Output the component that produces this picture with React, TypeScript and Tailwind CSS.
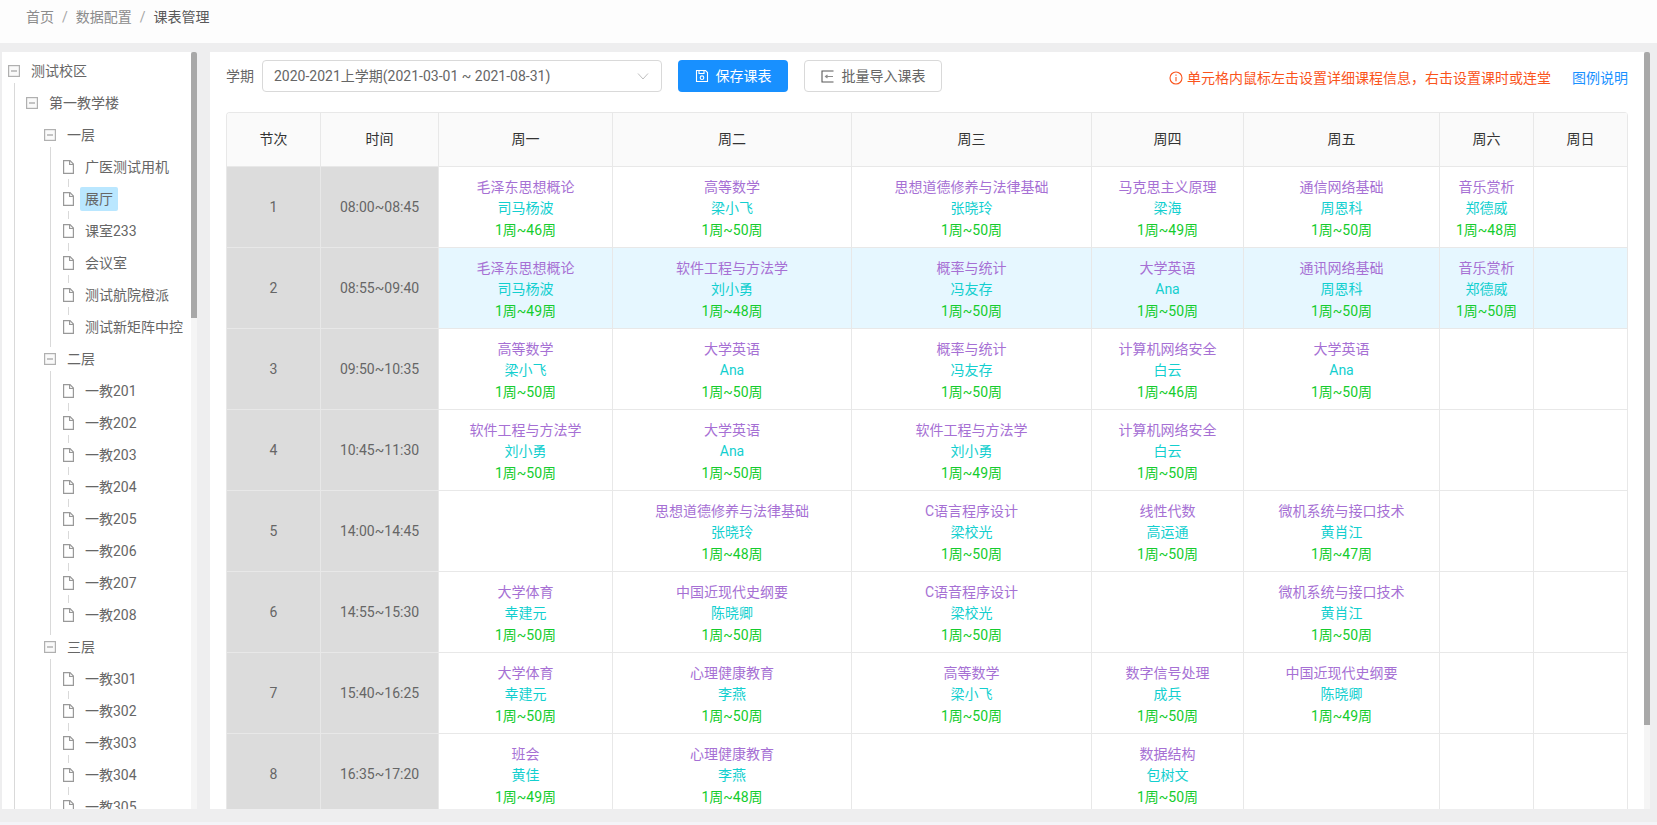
const FONT = "font-['Roboto','Noto_Sans_CJK_SC',sans-serif]";

type Course = [string, string, string] | null;

const rows: { no: number; time: string; blue?: boolean; cells: Course[] }[] = [
  {
    no: 1,
    time: "08:00~08:45",
    cells: [
      ["毛泽东思想概论", "司马杨波", "1周~46周"],
      ["高等数学", "梁小飞", "1周~50周"],
      ["思想道德修养与法律基础", "张晓玲", "1周~50周"],
      ["马克思主义原理", "梁海", "1周~49周"],
      ["通信网络基础", "周恩科", "1周~50周"],
      ["音乐赏析", "郑德威", "1周~48周"],
      null,
    ],
  },
  {
    no: 2,
    time: "08:55~09:40",
    blue: true,
    cells: [
      ["毛泽东思想概论", "司马杨波", "1周~49周"],
      ["软件工程与方法学", "刘小勇", "1周~48周"],
      ["概率与统计", "冯友存", "1周~50周"],
      ["大学英语", "Ana", "1周~50周"],
      ["通讯网络基础", "周恩科", "1周~50周"],
      ["音乐赏析", "郑德威", "1周~50周"],
      null,
    ],
  },
  {
    no: 3,
    time: "09:50~10:35",
    cells: [
      ["高等数学", "梁小飞", "1周~50周"],
      ["大学英语", "Ana", "1周~50周"],
      ["概率与统计", "冯友存", "1周~50周"],
      ["计算机网络安全", "白云", "1周~46周"],
      ["大学英语", "Ana", "1周~50周"],
      null,
      null,
    ],
  },
  {
    no: 4,
    time: "10:45~11:30",
    cells: [
      ["软件工程与方法学", "刘小勇", "1周~50周"],
      ["大学英语", "Ana", "1周~50周"],
      ["软件工程与方法学", "刘小勇", "1周~49周"],
      ["计算机网络安全", "白云", "1周~50周"],
      null,
      null,
      null,
    ],
  },
  {
    no: 5,
    time: "14:00~14:45",
    cells: [
      null,
      ["思想道德修养与法律基础", "张晓玲", "1周~48周"],
      ["C语言程序设计", "梁校光", "1周~50周"],
      ["线性代数", "高运通", "1周~50周"],
      ["微机系统与接口技术", "黄肖江", "1周~47周"],
      null,
      null,
    ],
  },
  {
    no: 6,
    time: "14:55~15:30",
    cells: [
      ["大学体育", "幸建元", "1周~50周"],
      ["中国近现代史纲要", "陈晓卿", "1周~50周"],
      ["C语音程序设计", "梁校光", "1周~50周"],
      null,
      ["微机系统与接口技术", "黄肖江", "1周~50周"],
      null,
      null,
    ],
  },
  {
    no: 7,
    time: "15:40~16:25",
    cells: [
      ["大学体育", "幸建元", "1周~50周"],
      ["心理健康教育", "李燕", "1周~50周"],
      ["高等数学", "梁小飞", "1周~50周"],
      ["数字信号处理", "成兵", "1周~50周"],
      ["中国近现代史纲要", "陈晓卿", "1周~49周"],
      null,
      null,
    ],
  },
  {
    no: 8,
    time: "16:35~17:20",
    cells: [
      ["班会", "黄佳", "1周~49周"],
      ["心理健康教育", "李燕", "1周~48周"],
      null,
      ["数据结构", "包树文", "1周~50周"],
      null,
      null,
      null,
    ],
  },
];

const days = ["周一", "周二", "周三", "周四", "周五", "周六", "周日"];

const floors = [
  { name: "一层", rooms: ["广医测试用机", "展厅", "课室233", "会议室", "测试航院橙派", "测试新矩阵中控"] },
  { name: "二层", rooms: ["一教201", "一教202", "一教203", "一教204", "一教205", "一教206", "一教207", "一教208"] },
  { name: "三层", rooms: ["一教301", "一教302", "一教303", "一教304", "一教305"] },
];

function MinusBox() {
  return (
    <svg width="12" height="12" viewBox="0 0 12 12" className="shrink-0">
      <rect x="0.6" y="0.6" width="10.8" height="10.8" fill="#fafafa" stroke="#b0b0b0" strokeWidth="1.200" />
      <path d="M3 6h6" stroke="#a0a0a0" strokeWidth="1.200" />
    </svg>
  );
}

function FileIcon() {
  return (
    <svg width="11" height="14" viewBox="0 0 11 14" fill="none" stroke="#999" strokeWidth="1.200" className="shrink-0">
      <path d="M0.6 0.6h6.400l3.400 3.400v9.400h-9.800z" />
      <path d="M6.600 0.600v3.900h3.800" />
    </svg>
  );
}

function TreeRow({ name, className = "" }: { name: string; className?: string }) {
  return (
    <div className={`flex h-8 items-center text-[14px] text-[#666] ${className}`}>
      <MinusBox />
      <span className="ml-[11px] whitespace-nowrap">{name}</span>
    </div>
  );
}

function Leaf({ name, first, last, active }: { name: string; first: boolean; last: boolean; active: boolean }) {
  return (
    <div className="flex h-8 text-[14px] text-[#666]">
      <div className="flex w-[11px] shrink-0 flex-col items-center">
        <div className={`h-1 w-px ${first ? "" : "bg-[#d9d9d9]"}`} />
        <div className="mt-[5px]">
          <FileIcon />
        </div>
        <div className={`mt-[5px] h-1 w-px ${last ? "" : "bg-[#d9d9d9]"}`} />
      </div>
      <div className="ml-[6px] flex items-center">
        <span className={`whitespace-nowrap rounded-[2px] px-[5px] leading-6 ${active ? "bg-[#bae7ff]" : ""}`}>{name}</span>
      </div>
    </div>
  );
}

function Sidebar() {
  return (
    <aside className="flex w-[195px] shrink-0">
      <div className="min-w-0 flex-1 overflow-hidden bg-white pt-[3px]">
        <TreeRow name="测试校区" className="pl-[6px]" />
        <div className="ml-3 mt-[-4px] border-l border-[#d9d9d9] pl-[11px] pt-1">
          <TreeRow name="第一教学楼" />
          {floors.map((f) => (
            <div key={f.name}>
              <TreeRow name={f.name} className="pl-[18px]" />
              <div className="my-[-4px] ml-6 border-l border-[#d9d9d9] py-1 pl-3">
                {f.rooms.map((r, i) => (
                  <Leaf key={r} name={r} first={i === 0} last={i === f.rooms.length - 1} active={r === "展厅"} />
                ))}
              </div>
            </div>
          ))}
        </div>
      </div>
      <Scrollbar thumb="h-[266px]" />
    </aside>
  );
}

function Scrollbar({ thumb }: { thumb: string }) {
  return (
    <div className="w-[6px] shrink-0 bg-[#f5f5f5]">
      <div className={`${thumb} rounded-t-[2px] bg-[#a8a8a8]`} />
    </div>
  );
}

function CourseCell({ course, blue }: { course: Course; blue?: boolean }) {
  return (
    <td className={`border-b border-r border-[#e8e8e8] p-0 pt-1 text-center leading-[21.5px] ${blue ? "bg-[#e6f7ff]" : "bg-white"}`}>
      {course && (
        <>
          <div className="text-[#a670d4]">{course[0]}</div>
          <div className="text-[#13cfcf]">{course[1]}</div>
          <div className="text-[#14cc2d]">{course[2]}</div>
        </>
      )}
    </td>
  );
}

function Toolbar() {
  return (
    <div className="flex h-[60px] items-start pl-4 pr-[16px] pt-2 text-[14px]">
      <span className="w-[36px] shrink-0 leading-8 text-[#666]">学期</span>
      <div className="flex h-8 w-[400px] shrink-0 items-center justify-between rounded border border-[#d9d9d9] pl-[11px] pr-[12px] text-[#666]">
        <span>2020-2021上学期(2021-03-01 ~ 2021-08-31)</span>
        <svg width="12" height="12" viewBox="0 0 12 12" fill="none" stroke="#bfbfbf" strokeWidth="1">
          <path d="M1 3.500l5 5.500 5-5.500" />
        </svg>
      </div>
      <button className="ml-4 flex h-8 w-[110px] shrink-0 items-center justify-center rounded bg-[#1890ff] text-white">
        <svg width="14" height="14" viewBox="0 0 14 14" fill="none" stroke="#fff" strokeWidth="1.100">
          <path d="M1.500 1.500h9l2 2v9h-11z" />
          <path d="M4 1.500v3h5v-3" />
          <circle cx="7" cy="8.700" r="1.800" />
        </svg>
        <span className="ml-[7px]">保存课表</span>
      </button>
      <button className="ml-4 flex h-8 w-[138px] shrink-0 items-center justify-center rounded border border-[#d9d9d9] bg-white text-[#666]">
        <svg width="13" height="13" viewBox="0 0 13 13" fill="none" stroke="#595959" strokeWidth="1.100">
          <path d="M12.500 1h-11.500v11h11.500" />
          <path d="M12 6.500h-7M6.500 5l-2 1.500 2 1.500" stroke="#8c8c8c" />
        </svg>
        <span className="ml-2">批量导入课表</span>
      </button>
      <div className="ml-auto flex h-[36px] items-center text-[14px]">
        <svg width="14" height="14" viewBox="0 0 14 14" fill="none" stroke="#fa541c" strokeWidth="1.100">
          <circle cx="7" cy="7" r="6" />
          <path d="M7 6v4.200M7 3.500v1.200" />
        </svg>
        <span className="ml-[4px] text-[#fa541c]">单元格内鼠标左击设置详细课程信息，右击设置课时或连堂</span>
        <span className="ml-[21px] text-[#1890ff]">图例说明</span>
      </div>
    </div>
  );
}

function Timetable() {
  return (
    <div className="ml-4 w-[1402px] overflow-hidden rounded-t border-l border-t border-[#e8e8e8]">
      <table className="w-full table-fixed border-separate border-spacing-0 text-[14px]">
        <colgroup>
          <col className="w-[94px]" />
          <col className="w-[118px]" />
          <col className="w-[174px]" />
          <col className="w-[239px]" />
          <col className="w-[240px]" />
          <col className="w-[152px]" />
          <col className="w-[196px]" />
          <col className="w-[94px]" />
          <col className="w-[94px]" />
        </colgroup>
        <thead>
          <tr className="h-[54px] bg-[#fafafa] text-[#333]">
            {["节次", "时间", ...days].map((d) => (
              <th key={d} className="border-b border-r border-[#e8e8e8] p-0 text-center font-normal">
                {d}
              </th>
            ))}
          </tr>
        </thead>
        <tbody>
          {rows.map((r) => (
            <tr key={r.no} className="h-[81px]">
              <td className="border-b border-r border-[#e8e8e8] bg-[#dcdcdc] p-0 text-center text-[#666]">{r.no}</td>
              <td className="border-b border-r border-[#e8e8e8] bg-[#dcdcdc] p-0 text-center text-[#666]">{r.time}</td>
              {r.cells.map((c, i) => (
                <CourseCell key={i} course={c} blue={r.blue} />
              ))}
            </tr>
          ))}
        </tbody>
      </table>
    </div>
  );
}

export default function App() {
  return (
    <div className={`flex h-[825px] w-full flex-col overflow-hidden bg-[#eeeeef] ${FONT}`}>
      <header className="flex h-[43px] shrink-0 items-start bg-[#fdfdfd] pl-[26px] pt-[6px] text-[14px] leading-[22px] text-[#8c8c8c]">
        <span>首页</span>
        <span className="mx-2 text-[#a6a6a6]">/</span>
        <span>数据配置</span>
        <span className="mx-2 text-[#a6a6a6]">/</span>
        <span className="text-[#595959]">课表管理</span>
      </header>
      <div className="mt-[9px] flex h-[757px] shrink-0 pl-[2px] pr-[7px]">
        <Sidebar />
        <div className="ml-[13px] flex min-w-0 flex-1">
          <main className="min-w-0 flex-1 overflow-hidden bg-white">
            <Toolbar />
            <Timetable />
          </main>
          <Scrollbar thumb="h-[673px]" />
        </div>
      </div>
      <div className="mt-auto h-[3px] bg-[#f4f4f8]" />
    </div>
  );
}
